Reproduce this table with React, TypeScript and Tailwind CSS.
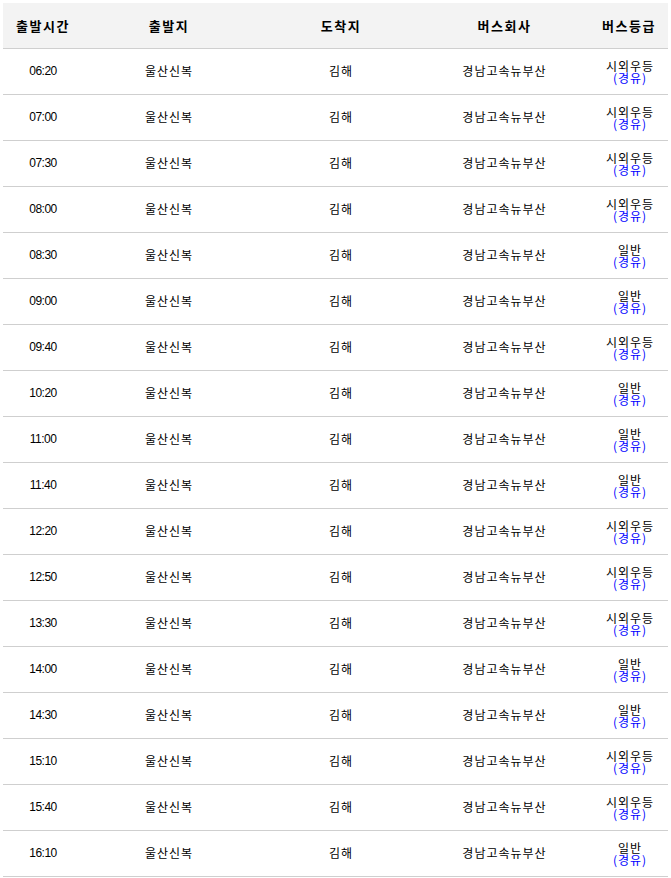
const rows: [string, string][] = [
  ["06:20", "시외우등"],
  ["07:00", "시외우등"],
  ["07:30", "시외우등"],
  ["08:00", "시외우등"],
  ["08:30", "일반"],
  ["09:00", "일반"],
  ["09:40", "시외우등"],
  ["10:20", "일반"],
  ["11:00", "일반"],
  ["11:40", "일반"],
  ["12:20", "시외우등"],
  ["12:50", "시외우등"],
  ["13:30", "시외우등"],
  ["14:00", "일반"],
  ["14:30", "일반"],
  ["15:10", "시외우등"],
  ["15:40", "시외우등"],
  ["16:10", "일반"],
];

const headers = ["출발시간", "출발지", "도착지", "버스회사", "버스등급"];

export default function App() {
  return (
    <div className="bg-white p-[3px] font-['Noto_Sans_CJK_KR',sans-serif] text-black">
      <table className="w-[665px] table-fixed border-collapse">
        <colgroup>
          <col className="w-[80px]" />
          <col className="w-[172px]" />
          <col className="w-[172px]" />
          <col className="w-[155px]" />
          <col className="w-[86px]" />
        </colgroup>
        <thead>
          <tr className="h-[45px] border-b border-[#cfcfcf] bg-[#f3f3f3]">
            {headers.map((h) => (
              <th key={h} className="p-0 text-center text-[13px] font-bold tracking-[1.5px] last:pl-[8px]">
                {h}
              </th>
            ))}
          </tr>
        </thead>
        <tbody>
          {rows.map(([time, grade]) => (
            <tr key={time} className="h-[46px] border-b border-[#cfcfcf] text-[12px] tracking-[1px]">
              <td className="p-0 text-center font-['Liberation_Sans',sans-serif] text-[12px] tracking-[-0.5px]">
                {time}
              </td>
              <td className="p-0 text-center">울산신복</td>
              <td className="p-0 text-center">김해</td>
              <td className="p-0 text-center">경남고속뉴부산</td>
              <td className="p-0 pt-[2px] pl-[10px] text-center leading-[12px]">
                <div>{grade}</div>
                <div className="text-[#0000ff]">(경유)</div>
              </td>
            </tr>
          ))}
        </tbody>
      </table>
    </div>
  );
}
